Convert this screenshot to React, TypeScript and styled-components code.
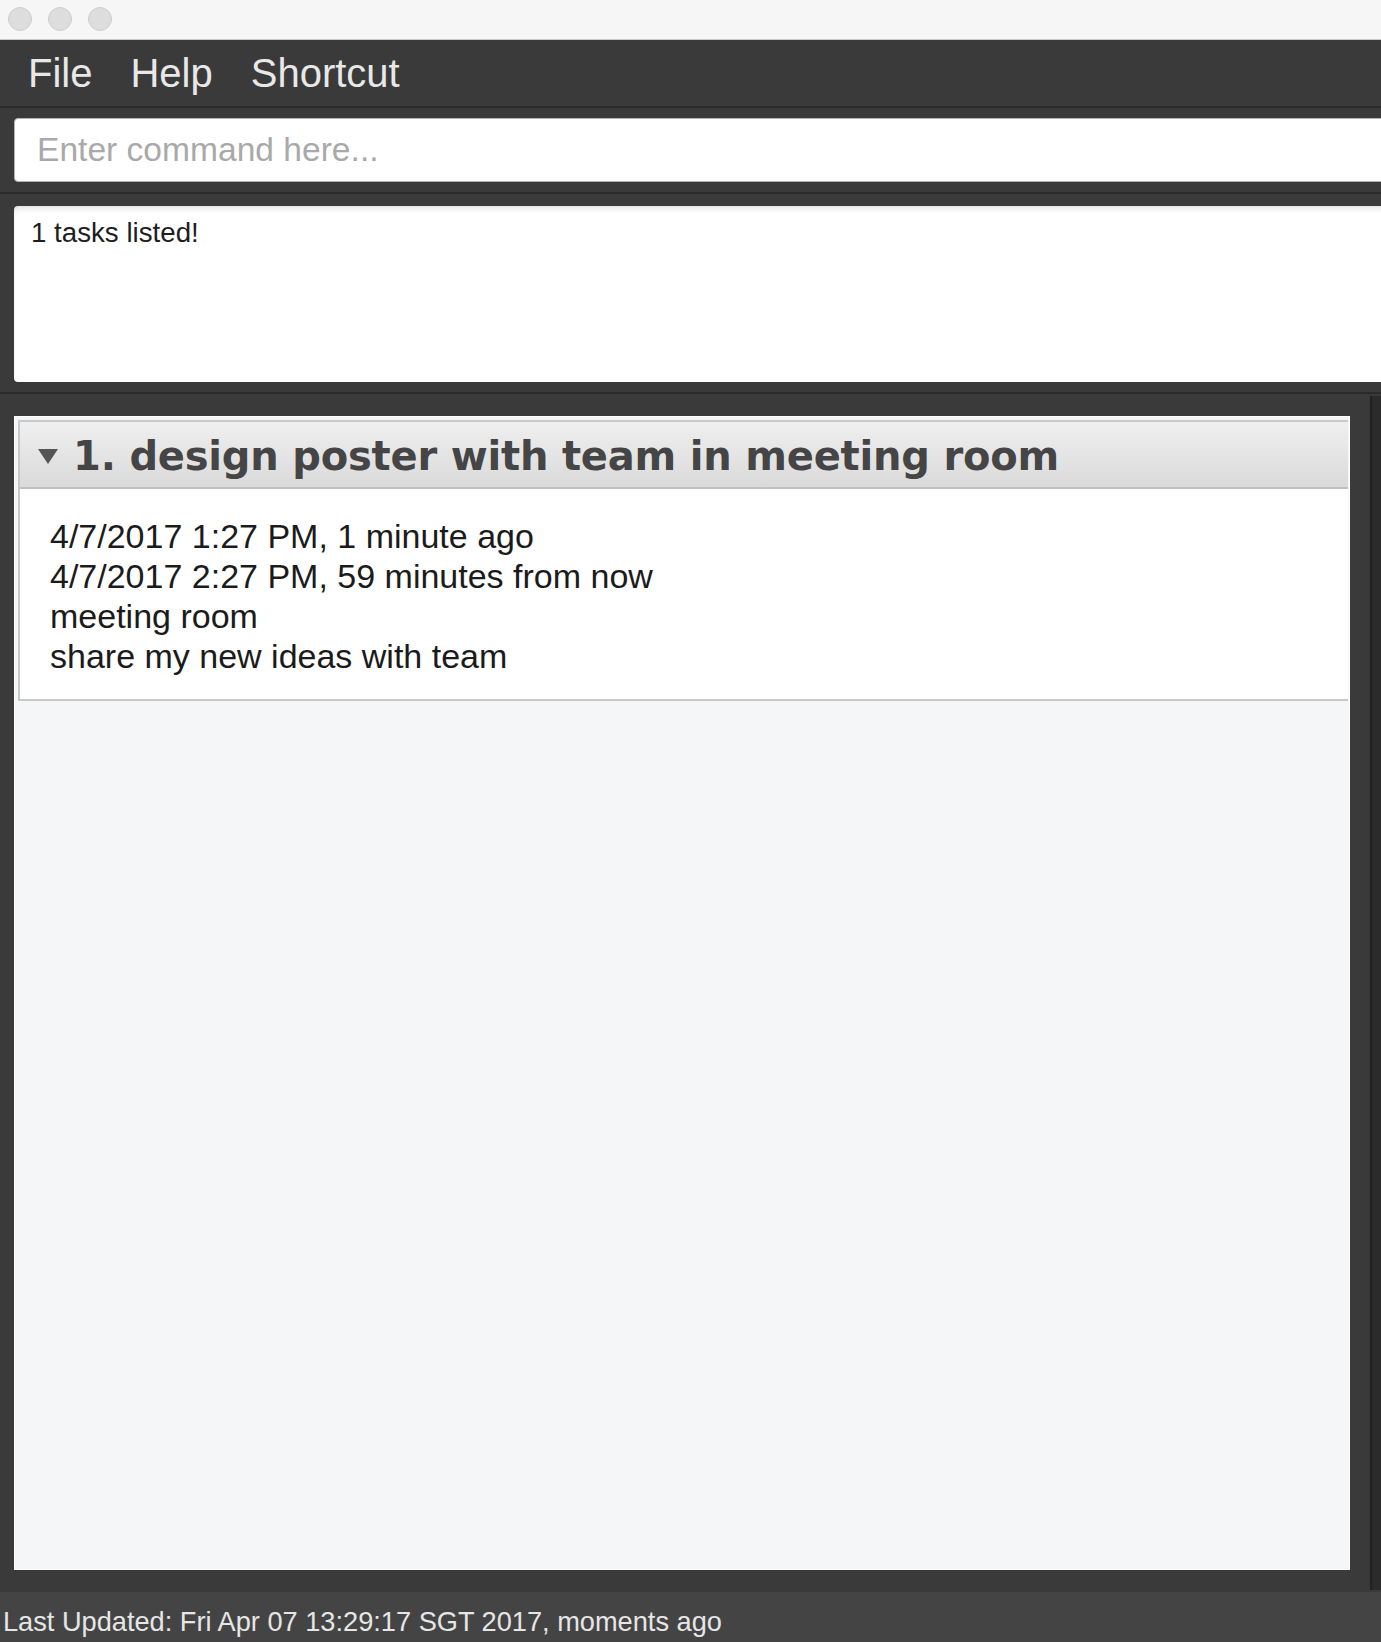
import styled, { createGlobalStyle } from 'styled-components'

const GlobalStyle = createGlobalStyle`
  html,
  body {
    margin: 0;
    padding: 0;
    height: 100%;
    overflow: hidden;
    background: #3a3a3a;
  }

  *,
  *::before,
  *::after {
    box-sizing: border-box;
  }
`

const Window = styled.div`
  display: flex;
  flex-direction: column;
  height: 100vh;
  overflow: hidden;
  background: #3a3a3a;
  font-family: 'Liberation Sans', Arial, sans-serif;
`

/* 맥 윈도우 타이틀바 */
const TitleBar = styled.div`
  display: flex;
  align-items: center;
  gap: 16px;
  height: 40px;
  padding: 0 0 2px 8px;
  background: #f6f6f6;
  border-bottom: 1px solid #c9c9c9;
`

const TrafficLight = styled.span`
  width: 24px;
  height: 24px;
  border-radius: 50%;
  background: #dddddd;
  border: 1px solid #cecece;
`

const MenuBar = styled.nav`
  display: flex;
  align-items: center;
  height: 66px;
  padding-left: 9px;
  background: #3a3a3a;
`

const MenuItem = styled.span`
  padding: 0 19px;
  font-size: 40px;
  color: #e8e8e8;
`

const Divider = styled.div`
  height: 2px;
  background: #2b2b2b;
  flex-shrink: 0;
`

const CommandSection = styled.div`
  height: 84px;
  padding: 10px 0 10px 14px;
  flex-shrink: 0;
`

const CommandInput = styled.input`
  display: block;
  /* 오른쪽 끝은 창 밖으로 잘려 보인다 */
  width: calc(100% + 20px);
  height: 64px;
  padding: 0 0 0 22px;
  border: 1px solid #b3b3b3;
  border-radius: 4px;
  background: #ffffff;
  font-family: 'Liberation Sans', Arial, sans-serif;
  font-size: 33.6px;
  color: #222;
  outline: none;

  &::placeholder {
    color: #a9a9a9;
  }
`

const ResultSection = styled.div`
  height: 198px;
  padding: 12px 0 10px 14px;
  flex-shrink: 0;
`

const ResultBox = styled.div`
  width: calc(100% + 20px);
  height: 176px;
  padding: 11px 0 0 17px;
  border-radius: 4px;
  background: #ffffff;
  box-shadow: inset 0 5px 6px -3px rgba(0, 0, 0, 0.14);
  font-size: 27.7px;
  color: #1e1e1e;
`

const ListSection = styled.div`
  flex: 1;
  display: flex;
  gap: 20px;
  padding-left: 14px;
  min-height: 0;
`

const ListPanel = styled.div`
  flex: 1;
  margin: 22px 0;
  padding: 3px 1px 0 3px;
  background: #f5f6f8;
  border: 1px solid #ffffff;
`

const ScrollTrack = styled.div`
  width: 11px;
  margin: 2px 0;
  background: #2b2b2b;
  border-left: 2px solid #212121;
`

const TaskCard = styled.div`
  border: 2px solid #c9c9c9;
  border-right: none;
  background: #ffffff;
`

const TaskHeader = styled.div`
  display: flex;
  align-items: center;
  gap: 15px;
  height: 67px;
  padding: 3px 0 0 18px;
  background: linear-gradient(#efefef, #dadada);
  border-bottom: 2px solid #c0c0c0;
`

const TaskTitle = styled.span`
  font-family: 'DejaVu Sans', Verdana, sans-serif;
  font-weight: 700;
  font-size: 40px;
  letter-spacing: -0.2px;
  color: #454545;
`

const TaskBody = styled.div`
  padding: 27px 0 23px 30px;
`

const TaskLine = styled.div`
  font-size: 34px;
  line-height: 40px;
  color: #1b1b1b;
`

const StatusBar = styled.footer`
  height: 50px;
  padding: 14px 0 0 3px;
  background: #444444;
  font-size: 27.2px;
  color: #e6e6e6;
  flex-shrink: 0;
`

const task = {
  index: 1,
  name: 'design poster with team in meeting room',
  details: [
    '4/7/2017 1:27 PM, 1 minute ago',
    '4/7/2017 2:27 PM, 59 minutes from now',
    'meeting room',
    'share my new ideas with team',
  ],
}

const App = () => {
  return (
    <Window>
      <GlobalStyle />
      <TitleBar>
        <TrafficLight />
        <TrafficLight />
        <TrafficLight />
      </TitleBar>

      <MenuBar>
        <MenuItem>File</MenuItem>
        <MenuItem>Help</MenuItem>
        <MenuItem>Shortcut</MenuItem>
      </MenuBar>
      <Divider />

      <CommandSection>
        <CommandInput placeholder="Enter command here..." />
      </CommandSection>
      <Divider />

      <ResultSection>
        <ResultBox>1 tasks listed!</ResultBox>
      </ResultSection>
      <Divider />

      <ListSection>
        <ListPanel>
          <TaskCard>
            <TaskHeader>
              <svg width="20" height="15" viewBox="0 0 20 15">
                <polygon points="0,0 20,0 10,15" fill="#555555" />
              </svg>
              <TaskTitle>
                {task.index}. {task.name}
              </TaskTitle>
            </TaskHeader>
            <TaskBody>
              {task.details.map((line) => (
                <TaskLine key={line}>{line}</TaskLine>
              ))}
            </TaskBody>
          </TaskCard>
        </ListPanel>
        <ScrollTrack />
      </ListSection>

      <StatusBar>Last Updated: Fri Apr 07 13:29:17 SGT 2017, moments ago</StatusBar>
    </Window>
  )
}

export default App
